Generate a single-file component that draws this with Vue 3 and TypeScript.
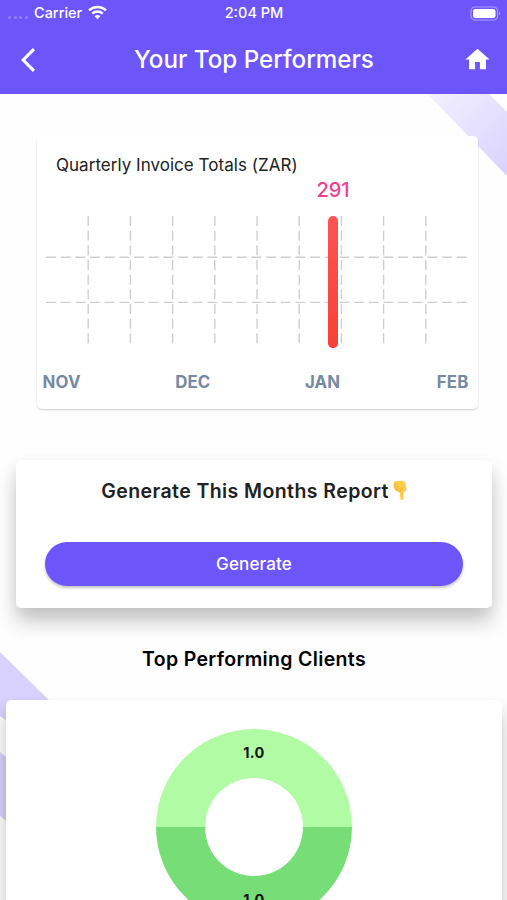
<script setup lang="ts">
interface Slice {
  value: string
  color: string
  path: string
}

const months: string[] = ['NOV', 'DEC', 'JAN', 'FEB']
const columns: number[] = Array.from({ length: 9 }, (_, i) => 42.2 * (i + 1))
const rows: number[] = [41.6, 86.7]
const slices: Slice[] = [
  { value: '1.0', color: '#b0fba4', path: 'M0 98a98 98 0 0 1 196 0h-49a49 49 0 0 0-98 0z' },
  { value: '1.0', color: '#77dd77', path: 'M196 98a98 98 0 0 1-196 0h49a49 49 0 0 0 98 0z' },
]
</script>

<template>
  <div class="screen">
    <svg class="backdrop" viewBox="0 0 507 900" aria-hidden="true">
      <defs>
        <linearGradient id="band" x1="0" y1="0" x2="1" y2="1">
          <stop offset="0" stop-color="#f3f1fe" />
          <stop offset="1" stop-color="#d9d2fd" />
        </linearGradient>
      </defs>
      <path d="M427 93.500H488.500L507 112V176z" fill="url(#band)" />
      <path d="M0 652L60 711V760L0 716z" fill="#d8d1fd" />
      <path d="M0 752L20 769V832L0 816z" fill="#d8d1fd" />
    </svg>

    <header class="header">
      <div class="status">
        <div class="carrier">
          <span class="dots"><i v-for="n in 4" :key="n" /></span>
          <span class="carrier-name">Carrier</span>
          <svg class="wifi" width="19" height="15" viewBox="0 0 19 15">
            <g fill="none" stroke="#fff" stroke-width="2.500">
              <path d="M1 5.400a12.200 12.200 0 0 1 17 0" />
              <path d="M4.300 8.700a7.500 7.500 0 0 1 10.400 0" />
            </g>
            <path d="M9.500 14.200L6.600 11.300a4.200 4.200 0 0 1 5.800 0z" fill="#fff" />
          </svg>
        </div>
        <span class="time">2:04 PM</span>
        <svg class="battery" width="31" height="15" viewBox="0 0 31 15">
          <rect x="1" y="1" width="26.500" height="13" rx="4" fill="none" stroke="#a79bfb" stroke-width="1.200" />
          <rect x="3" y="3" width="22.500" height="9" rx="2.300" fill="#fff" />
          <path d="M29 5.500a2.300 2.300 0 0 1 0 4z" fill="#a79bfb" />
        </svg>
      </div>
      <div class="nav">
        <svg class="back" width="14" height="24" viewBox="0 2 11.670 20">
          <path d="M11.670 3.870L9.900 2.100 0 12l9.900 9.900 1.770-1.770L3.540 12z" fill="#fff" />
        </svg>
        <h1 class="title">Your Top Performers</h1>
        <svg class="home" width="29" height="29" viewBox="0 0 24 24">
          <path d="M10 20v-6h4v6h5v-8h3L12 3 2 12h3v8z" fill="#fff" />
        </svg>
      </div>
    </header>

    <main class="content">
      <section class="card chart-card">
        <h2 class="chart-title">Quarterly Invoice Totals (ZAR)</h2>
        <svg class="chart" width="424" height="174" viewBox="0 0 424 174">
          <g stroke="#cdd0d1" stroke-width="1.400" stroke-dasharray="10 4.670">
            <line v-for="x in columns" :key="x" :x1="x" :x2="x" y1="40" y2="167.500" />
            <line v-for="y in rows" :key="y" x1="0" x2="422" :y1="y + 39.700" :y2="y + 39.700" />
          </g>
          <defs>
            <linearGradient id="bar" x1="0" y1="0" x2="0" y2="1">
              <stop offset="0" stop-color="#ff5252" />
              <stop offset="1" stop-color="#f44336" />
            </linearGradient>
          </defs>
          <rect x="282" y="40" width="10" height="132.300" rx="5" fill="url(#bar)" />
          <text x="287" y="20.700" text-anchor="middle" class="bar-value">291</text>
        </svg>
        <div class="months">
          <span v-for="m in months" :key="m">{{ m }}</span>
        </div>
      </section>

      <section class="card report-card">
        <h2 class="report-title">
          <span class="report-text">Generate This Months Report</span>
          <svg class="hand" width="14" height="21" viewBox="0 0 14 21">
            <path d="M1 2.500Q1 1 2.500 1L9 .8Q11 .7 12 2.400L13.300 7Q14 9.500 12.800 11.300L10.800 12 10.300 18.500Q10 20 8.700 20T7.400 18.500L6.700 12.300 4.300 11.400Q2.700 11.500 2.300 9.900L1 8.500Q.2 7.500.8 6.300Q0 5 .7 4z" fill="#ffcb4a" />
            <path d="M1.300 4.700l3.500-.5M1.200 7.100l3.900-.4M2.600 9.500l3.200-.5M7 12.500V10l3-1.800" fill="none" stroke="#eba934" stroke-width=".8" stroke-linecap="round" />
          </svg>
        </h2>
        <button class="generate" type="button">Generate</button>
      </section>

      <h2 class="clients-title">Top Performing Clients</h2>

      <section class="card clients-card">
        <svg class="donut" width="196" height="196" viewBox="0 0 196 196">
          <path v-for="s in slices" :key="s.color" :d="s.path" :fill="s.color" />
          <text v-for="(s, i) in slices" :key="i" x="98" :y="29.300 + i * 146.500" text-anchor="middle" class="slice-value">{{ s.value }}</text>
        </svg>
      </section>
    </main>
  </div>
</template>

<style>
body {
  margin: 0;
  background: #fefefe;
}
</style>

<style scoped>
.screen {
  position: relative;
  width: 507px;
  height: 900px;
  overflow: hidden;
  background: #fefefe;
  font-family: Inter, "Liberation Sans", sans-serif;
  color: #212121;
}
.backdrop {
  position: absolute;
  inset: 0;
}
h1,
h2 {
  margin: 0;
  white-space: nowrap;
}
.header {
  position: relative;
  height: 93.5px;
  box-sizing: border-box;
  background: #6c56f9;
  color: #fff;
}
.status {
  display: grid;
  grid-template-columns: 1fr auto 1fr;
  align-items: center;
  height: 26px;
  padding: 0 6px 0 8px;
}
.carrier {
  display: flex;
  align-items: center;
}
.dots {
  display: flex;
  gap: 2.6px;
  margin-top: 8px;
  width: 26px;
}
.dots i {
  width: 3px;
  height: 3px;
  border-radius: 50%;
  background: #9184fb;
}
.carrier-name,
.time {
  font-size: 14.5px;
  font-weight: 500;
  line-height: 20px;
}
.time {
  margin-left: -1px;
}
.wifi {
  margin: 0 0 1px 6px;
}
.battery {
  justify-self: end;
}
.nav {
  display: grid;
  grid-template-columns: 29px 1fr 29px;
  align-items: center;
  height: 67px;
  padding: 0 15px 0 21px;
}
.title {
  justify-self: center;
  margin-right: 5px;
  padding-top: 1px;
  font-size: 24.2px;
  font-weight: 500;
  line-height: 30px;
}
.content {
  position: relative;
  display: flex;
  flex-direction: column;
  align-items: center;
}
.card {
  box-sizing: border-box;
  background: #fff;
  border-radius: 5px;
}
.chart-card {
  width: 441px;
  height: 273px;
  margin: 42px 0 0 7px;
  padding: 17px 9px 0;
  box-shadow: 0 1px 2px rgba(0, 0, 0, 0.2);
}
.chart-title {
  padding-left: 10.5px;
  font-size: 17px;
  font-weight: 400;
  line-height: 24px;
  letter-spacing: 0.03px;
}
.chart {
  display: block;
  margin-top: -1px;
}
.bar-value {
  font-size: 20px;
  font-weight: 500;
  fill: #f2418a;
}
.months {
  display: flex;
  justify-content: space-between;
  margin: 20px 0 0 -3px;
  font-size: 16.8px;
  font-weight: 700;
  line-height: 24px;
  letter-spacing: 0.2px;
  color: #7589a2;
}
.months span:nth-child(2),
.months span:nth-child(3) {
  margin-left: -2px;
}
.report-card {
  width: 476px;
  height: 148.5px;
  margin: 51px 0 0 1px;
  padding: 17px 29px 0;
  box-shadow: 0 14px 20px rgba(0, 0, 0, 0.21), 0 4px 16px rgba(0, 0, 0, 0.05);
}
.report-title {
  display: flex;
  align-items: center;
  justify-content: center;
  gap: 4px;
  font-size: 19.5px;
  font-weight: 600;
  line-height: 28px;
  letter-spacing: 0.42px;
}
.generate {
  display: block;
  width: 418px;
  height: 44px;
  margin-top: 37px;
  padding: 0;
  border: 0;
  border-radius: 22px;
  background: #6c56f9;
  box-shadow: 0 2px 3px rgba(0, 0, 0, 0.24);
  color: #fff;
  font-family: inherit;
  font-size: 17px;
  font-weight: 500;
  letter-spacing: 0.15px;
}
.clients-title {
  margin: 37px 0 0 1px;
  font-size: 19.5px;
  font-weight: 600;
  line-height: 28px;
  letter-spacing: 0.34px;
  color: #000;
}
.clients-card {
  display: flex;
  justify-content: center;
  width: 496px;
  height: 260px;
  margin-top: 26.500px;
  padding-top: 29.500px;
  box-shadow: 0 14px 20px rgba(0, 0, 0, 0.2), 0 4px 12px rgba(0, 0, 0, 0.05);
}
.slice-value {
  font-size: 14.5px;
  font-weight: 700;
  letter-spacing: 0.3px;
  fill: #111;
}
</style>
